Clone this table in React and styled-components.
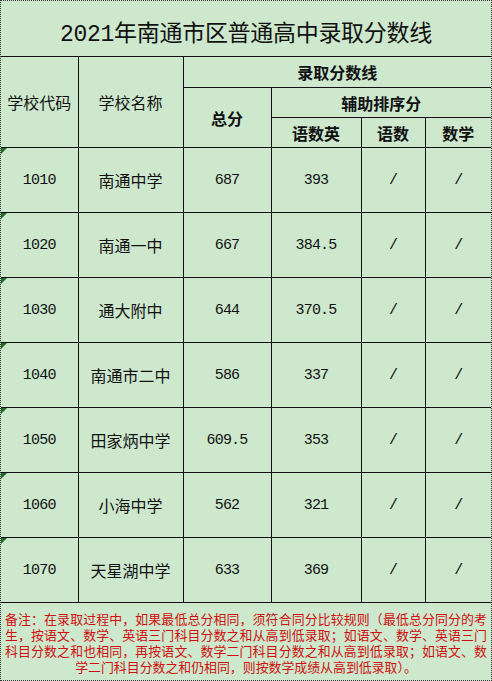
import styled, { createGlobalStyle } from "styled-components";

const GlobalStyle = createGlobalStyle`
    html, body {
        margin: 0;
        padding: 0;
        background: #cde8cd;
    }
    body {
        font-family: "Noto Sans CJK SC", sans-serif;
    }
`

const Sheet = styled.div`
    width: 492px;
    height: 681px;
    box-sizing: border-box;
    border: 1px dotted #333;
    background-color: #cde8cd;
    display: flex;
    flex-direction: column;
`
const Title = styled.div`
    height: 55px;
    display: flex;
    align-items: center;
    justify-content: center;
    font-family: "Liberation Mono", "Noto Sans CJK SC", monospace;
    font-size: 23px;
    letter-spacing: -0.3px;
    color: #111;
    padding-top: 4px;
    box-sizing: border-box;
`
const Table = styled.table`
    width: 490px;
    border-collapse: collapse;
    table-layout: fixed;
`
const HeadCell = styled.th`
    height: ${props => props.h || 29}px;
    padding: 0;
    border: 1.5px solid #111;
    font-family: "Noto Sans CJK SC", sans-serif;
    font-size: 16px;
    font-weight: ${props => props.bold ? 700 : 400};
    color: #111;
    text-align: center;
    vertical-align: middle;
    &:first-child { border-left: none; }
    &:last-child { border-right: none; }
`
const Row = styled.tr`
    height: 65px;
`
const Cell = styled.td`
    position: relative;
    padding: 0;
    border: 1.5px solid #111;
    text-align: center;
    vertical-align: middle;
    color: #111;
    font-family: ${props => props.cjk ? '"Noto Sans CJK SC", sans-serif' : '"Liberation Mono", monospace'};
    font-size: ${props => props.cjk ? 16 : 15}px;
    letter-spacing: ${props => props.cjk ? 0 : -0.8}px;
    &:first-child { border-left: none; }
    &:last-child { border-right: none; }
`
const Marker = styled.span`
    position: absolute;
    top: 0;
    left: 0;
    width: 0;
    height: 0;
    border-top: 6px solid #1f6b2a;
    border-right: 6px solid transparent;
`
const Note = styled.div`
    flex: 1;
    padding: 8px 4px 0 4px;
    font-size: 12.9px;
    line-height: 16px;
    color: #d01010;
    text-align: justify;
    text-align-last: center;
    font-family: "Noto Sans CJK SC", sans-serif;
`

const schools = [
    { code: "1010", name: "南通中学", total: "687", yse: "393" },
    { code: "1020", name: "南通一中", total: "667", yse: "384.5" },
    { code: "1030", name: "通大附中", total: "644", yse: "370.5" },
    { code: "1040", name: "南通市二中", total: "586", yse: "337" },
    { code: "1050", name: "田家炳中学", total: "609.5", yse: "353" },
    { code: "1060", name: "小海中学", total: "562", yse: "321" },
    { code: "1070", name: "天星湖中学", total: "633", yse: "369" },
]

const App = () => {
  return (
    <>
    <GlobalStyle />
    <Sheet>
        <Title>2021年南通市区普通高中录取分数线</Title>
        <Table>
            <colgroup>
                <col style={{ width: 77 }} />
                <col style={{ width: 105 }} />
                <col style={{ width: 88 }} />
                <col style={{ width: 90 }} />
                <col style={{ width: 64 }} />
                <col style={{ width: 66 }} />
            </colgroup>
            <thead>
                <tr>
                    <HeadCell rowSpan={3}>学校代码</HeadCell>
                    <HeadCell rowSpan={3}>学校名称</HeadCell>
                    <HeadCell colSpan={4} bold h={30}>录取分数线</HeadCell>
                </tr>
                <tr>
                    <HeadCell rowSpan={2} bold>总分</HeadCell>
                    <HeadCell colSpan={3} bold>辅助排序分</HeadCell>
                </tr>
                <tr>
                    <HeadCell bold>语数英</HeadCell>
                    <HeadCell bold>语数</HeadCell>
                    <HeadCell bold>数学</HeadCell>
                </tr>
            </thead>
            <tbody>
                {schools.map(s => (
                    <Row key={s.code}>
                        <Cell><Marker />{s.code}</Cell>
                        <Cell cjk>{s.name}</Cell>
                        <Cell>{s.total}</Cell>
                        <Cell>{s.yse}</Cell>
                        <Cell>/</Cell>
                        <Cell>/</Cell>
                    </Row>
                ))}
            </tbody>
        </Table>
        <Note>
            备注：在录取过程中，如果最低总分相同，须符合同分比较规则（最低总分同分的考生，按语文、数学、英语三门科目分数之和从高到低录取；如语文、数学、英语三门科目分数之和也相同，再按语文、数学二门科目分数之和从高到低录取；如语文、数学二门科目分数之和仍相同，则按数学成绩从高到低录取）。
        </Note>
    </Sheet>
    </>
  )
}

export default App
